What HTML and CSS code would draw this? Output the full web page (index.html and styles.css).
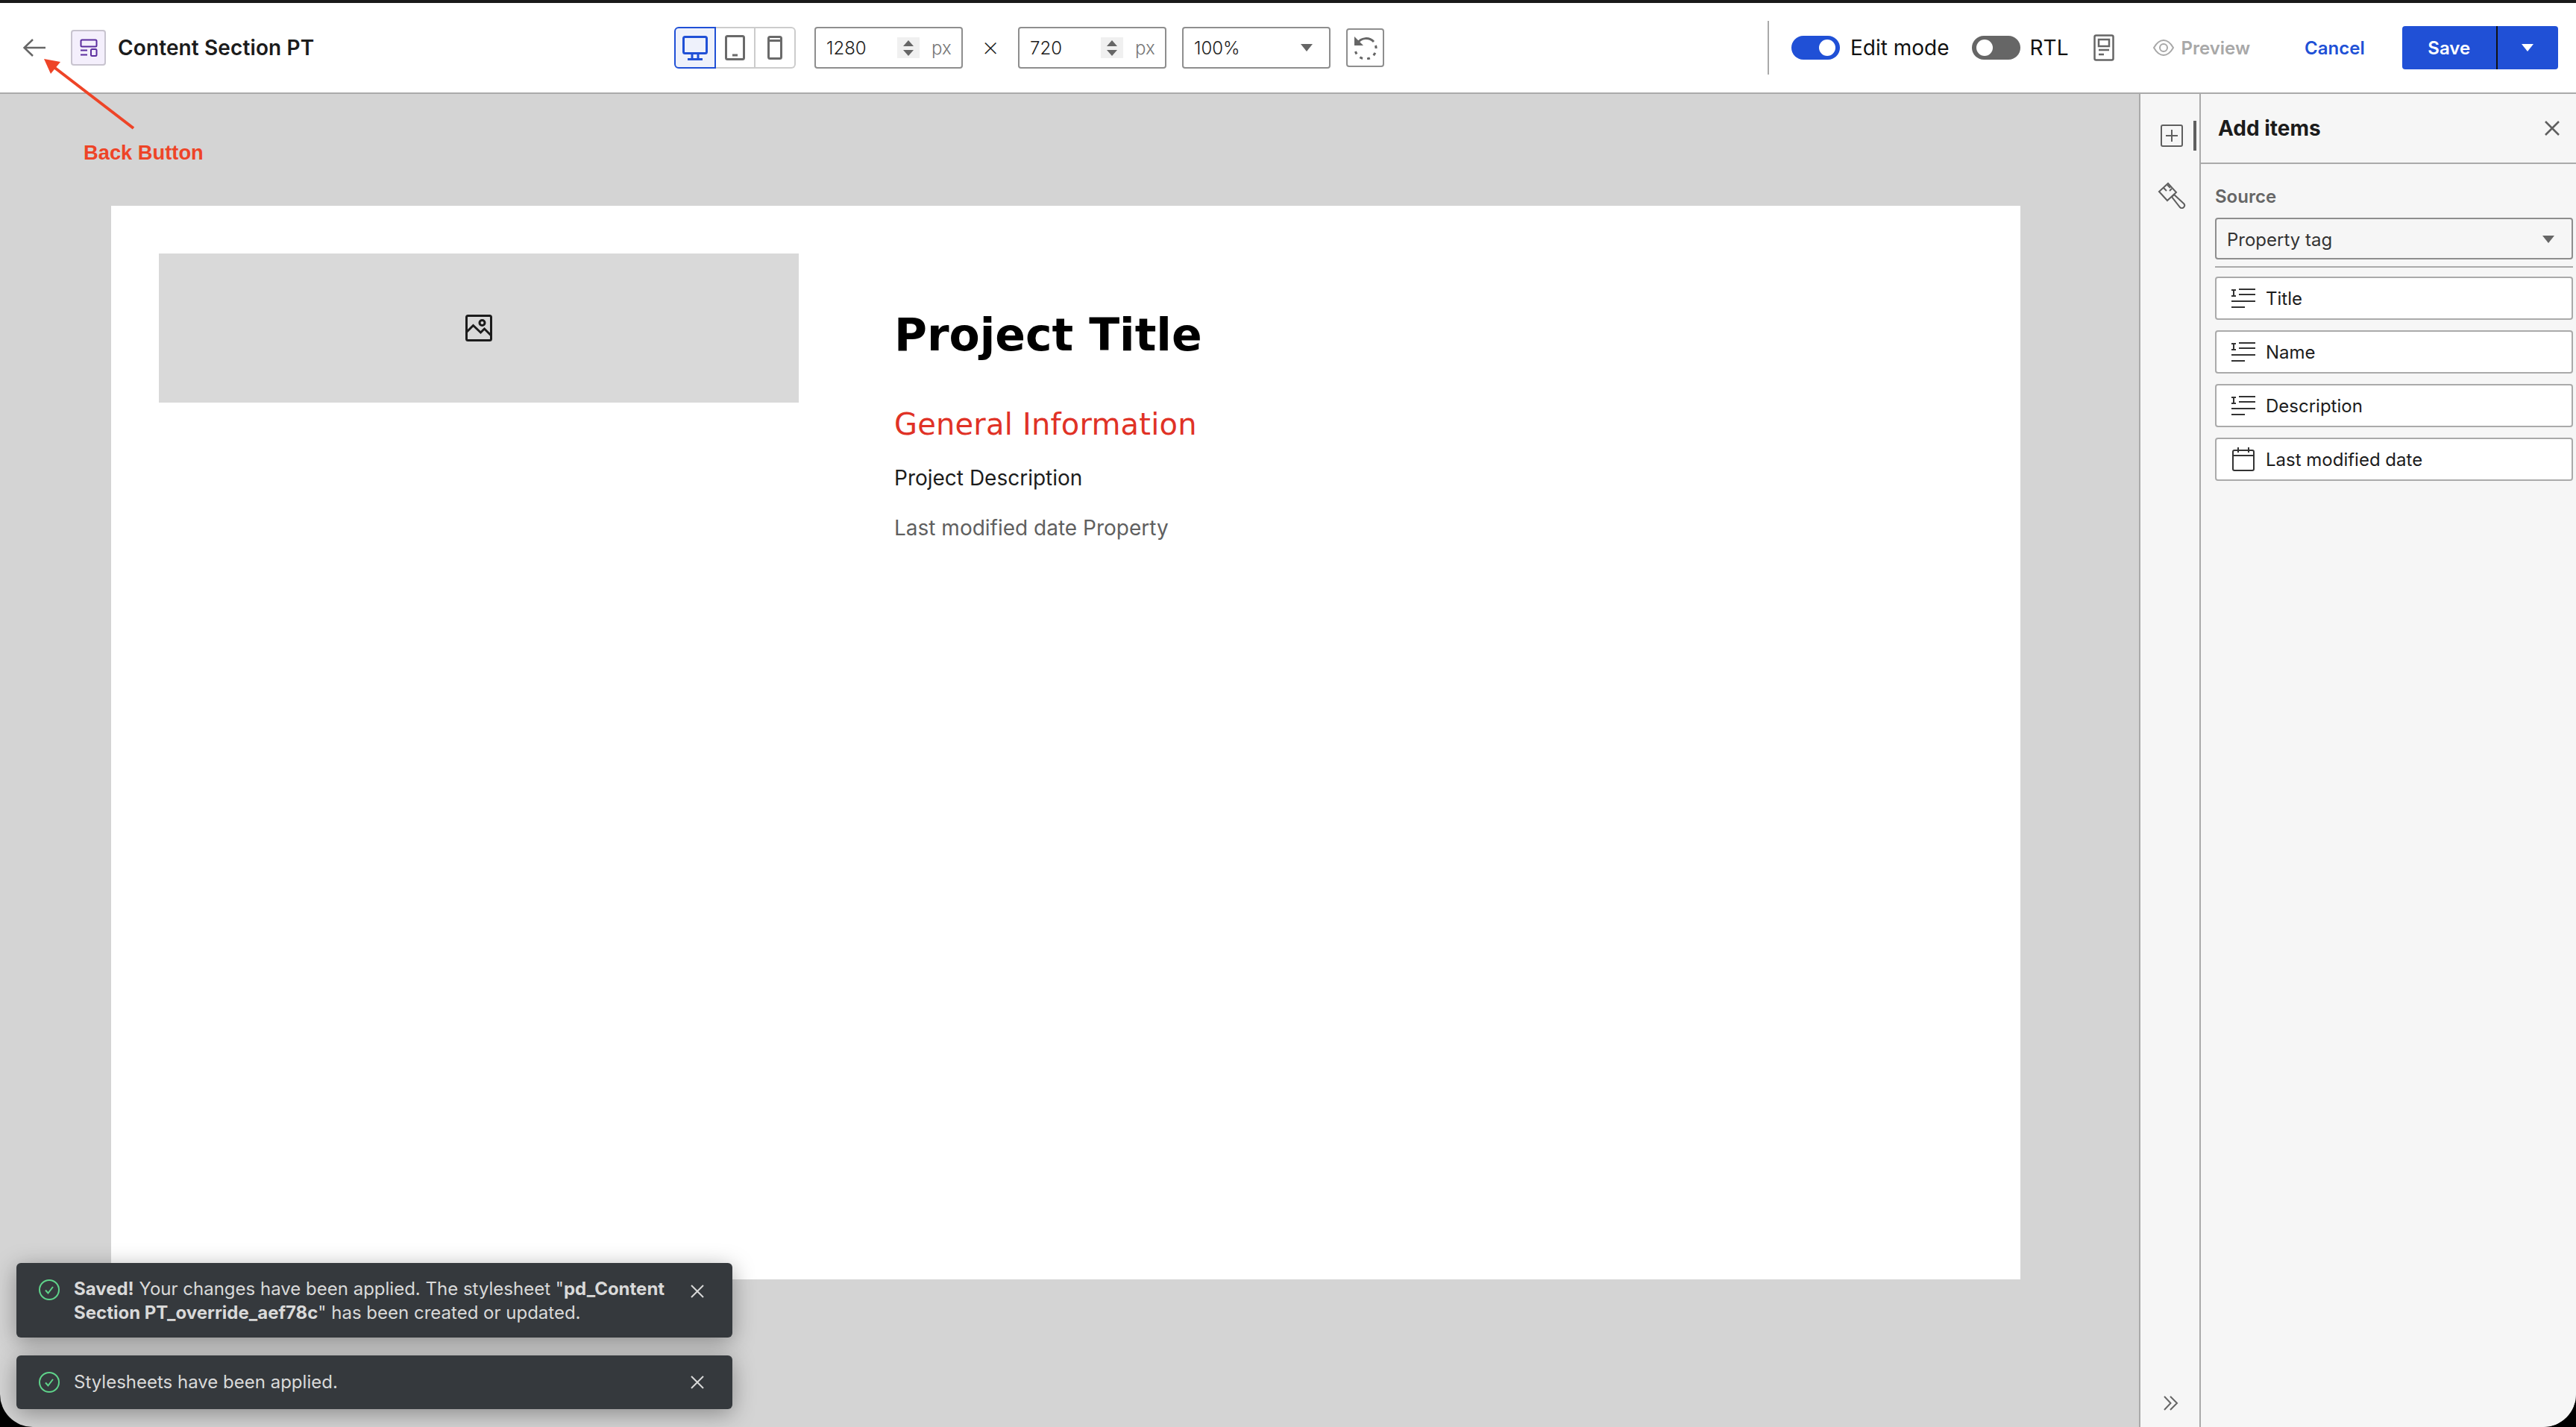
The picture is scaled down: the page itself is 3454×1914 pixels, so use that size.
FILE: index.html
```html
<!DOCTYPE html>
<html lang="en">
<head>
<meta charset="utf-8">
<title>Content Section PT</title>
<link rel="stylesheet" href="styles.css">
</head>
<body>
<div class="app">
  <header class="topbar">
    <div class="tb-left">
      <svg class="back" viewBox="0 0 30 24"><path d="M30 12H1.500M13 1 1.500 12 13 23"/></svg>
      <span class="frag-icon"><svg viewBox="0 0 24 24"><rect x="1.500" y="1.500" width="21" height="9" rx="1.500"/><path d="M1 15.500h9M1 21.500h9"/><rect x="15" y="14" width="7.500" height="9" rx="1.500"/></svg></span>
      <span class="frag-title">Content Section PT</span>
    </div>
    <div class="tb-center">
      <div class="devices">
        <button class="dev dev-on"><svg width="34" height="33" viewBox="0 0 34 33"><rect x="1.500" y="1.500" width="31" height="22" rx="2"/><path d="M13 24v7M21 24v7M7 31.500h20"/></svg></button>
        <button class="dev"><svg width="27" height="34" viewBox="0 0 27 34"><rect x="1.500" y="1.500" width="24" height="31" rx="2"/><path d="M10 27h7"/></svg></button>
        <button class="dev"><svg width="20" height="32" viewBox="0 0 20 32"><rect x="1.500" y="1.500" width="17" height="29" rx="2"/><path d="M2 6.500h16"/></svg></button>
      </div>
      <div class="field field-num">
        <span class="val">1280</span>
        <span class="spin"><i class="up"></i><i class="down"></i></span>
        <span class="unit">px</span>
      </div>
      <span class="times">×</span>
      <div class="field field-num">
        <span class="val">720</span>
        <span class="spin"><i class="up"></i><i class="down"></i></span>
        <span class="unit">px</span>
      </div>
      <div class="field field-sel">
        <span class="val">100%</span>
        <i class="caret"></i>
      </div>
      <button class="reset"><svg width="32" height="32" viewBox="0 0 32 32"><path class="reset-head" d="M1 1v12h12Z"/><path d="M5 10A14 14 0 0 1 27 8"/><path class="dash" d="M29.500 13A14 14 0 1 1 2.500 21"/></svg></button>
    </div>
    <div class="tb-right">
      <span class="vline"></span>
      <span class="switch switch-on"><i></i></span>
      <span class="sw-label lbl-edit">Edit mode</span>
      <span class="switch switch-off"><i></i></span>
      <span class="sw-label lbl-rtl">RTL</span>
      <svg class="doc" width="28" height="36" viewBox="0 0 28 36"><rect x="1.500" y="1.500" width="25" height="33" rx="2"/><rect x="7" y="7" width="14" height="9"/><path d="M7 21h14M7 27h7"/></svg>
      <span class="preview"><svg width="28" height="28" viewBox="0 0 28 28"><path d="M1 14C5 7 9 4 14 4s9 3 13 10c-4 7-8 10-13 10S5 21 1 14Z"/><circle cx="14" cy="14" r="5"/></svg>Preview</span>
      <span class="cancel">Cancel</span>
      <div class="save-group">
        <span class="save">Save</span>
        <span class="save-more"><i></i></span>
      </div>
    </div>
  </header>

  <div class="workspace">
    <main class="canvas">
      <section class="frame">
        <div class="placeholder">
          <svg width="36" height="36" viewBox="0 0 36 36"><rect x="1.500" y="1.500" width="33" height="33" rx="2"/><circle cx="22.500" cy="11" r="3.500"/><path d="M2 23l8.500-8.500 10 9.500 5-5L34 27.500"/></svg>
        </div>
        <div class="copy">
          <h1 class="p-title">Project Title</h1>
          <h2 class="p-sub">General Information</h2>
          <p class="p-desc">Project Description</p>
          <p class="p-date">Last modified date Property</p>
        </div>
      </section>
    </main>

    <nav class="rail">
      <div class="rail-tab">
        <svg width="30" height="30" viewBox="0 0 30 30"><rect x="1" y="1" width="28" height="28" rx="2"/><path d="M15 7v16M7 15h16"/></svg>
        <span class="rail-active"></span>
      </div>
      <div class="rail-tab rail-brush">
        <svg width="38" height="36" viewBox="0 0 38 36"><path d="M2 13 14 2l11 12-12 11Z"/><path d="M8 8l4 4M13 4l4 4M19 9l-3 3"/><path d="M19 20l3-3 13 12c2 2 1 4 0 5s-3 2-5 0Z"/></svg>
      </div>
      <svg class="rail-collapse" width="20" height="20" viewBox="0 0 20 20"><path d="M1 1l8.500 9-8.500 9M9 1l9 9-9 9"/></svg>
    </nav>

    <aside class="panel">
      <div class="panel-head">
        <span class="panel-title">Add items</span>
        <svg class="panel-x" width="20" height="20" viewBox="0 0 20 20"><path d="M1 1l18 18M19 1 1 19"/></svg>
      </div>
      <div class="panel-body">
        <label class="src-label">Source</label>
        <div class="src-select"><span>Property tag</span><i class="caret"></i></div>
        <div class="src-rule"></div>
        <ul class="items">
          <li class="item"><svg class="ti" width="32" height="26" viewBox="0 0 32 26"><path d="M0 2h6M3 2v7M0 10h6"/><path d="M10 1h22M10 8h22M0 17h32M0 25h18"/></svg>Title</li>
          <li class="item"><svg class="ti" width="32" height="26" viewBox="0 0 32 26"><path d="M0 2h6M3 2v7M0 10h6"/><path d="M10 1h22M10 8h22M0 17h32M0 25h18"/></svg>Name</li>
          <li class="item"><svg class="ti" width="32" height="26" viewBox="0 0 32 26"><path d="M0 2h6M3 2v7M0 10h6"/><path d="M10 1h22M10 8h22M0 17h32M0 25h18"/></svg>Description</li>
          <li class="item"><svg class="ti" width="32" height="32" viewBox="0 0 32 32"><rect x="2" y="4" width="28" height="27" rx="2"/><path d="M2 11h28M9 0v7M23 0v7"/></svg>Last modified date</li>
        </ul>
      </div>
    </aside>
  </div>

  <div class="note">
    <svg class="note-arrow" width="130" height="100" viewBox="0 0 130 100"><path d="M120 93 12 10" class="shaft"/><path d="M0 0 22 4 9 20Z" class="head"/></svg>
    <span class="note-text">Back Button</span>
  </div>

  <div class="toasts">
    <div class="toast toast-long">
      <svg class="ok" width="28" height="28" viewBox="0 0 28 28"><circle cx="14" cy="14" r="13"/><path d="M9 14.500l3.500 4L19 10"/></svg>
      <p class="toast-text"><b>Saved!</b> Your changes have been applied. The stylesheet "<b>pd_Content Section PT_override_aef78c</b>" has been created or updated.</p>
      <svg class="toast-x" width="20" height="20" viewBox="0 0 20 20"><path d="M2 2l16 16M18 2 2 18"/></svg>
    </div>
    <div class="toast">
      <svg class="ok" width="28" height="28" viewBox="0 0 28 28"><circle cx="14" cy="14" r="13"/><path d="M9 14.500l3.500 4L19 10"/></svg>
      <p class="toast-text">Stylesheets have been applied.</p>
      <svg class="toast-x" width="20" height="20" viewBox="0 0 20 20"><path d="M2 2l16 16M18 2 2 18"/></svg>
    </div>
  </div>
</div>
</body>
</html>
```

FILE: styles.css
```css
* { box-sizing: border-box; }
html, body { margin: 0; padding: 0; background: #000; }
body { width: 3454px; height: 1914px; overflow: hidden; font-family: Inter, "Liberation Sans", sans-serif; color: #1c1c1c; }
svg { display: block; flex: none; fill: none; }
p, h1, h2, ul { margin: 0; padding: 0; }
i { display: block; }
button { padding: 0; font: inherit; background: none; }

.app { position: relative; width: 3454px; height: 1914px; display: flex; flex-direction: column; background: #d4d4d4; border-top: 4px solid #1a1a1a; border-radius: 0 0 44px 44px; overflow: hidden; }

/* top bar */
.topbar { flex: none; height: 122px; background: #fff; border-bottom: 2px solid #aaa; display: flex; align-items: center; }
.tb-left { flex: 0 0 904px; display: flex; align-items: center; padding-left: 31px; }
.back { width: 30px; height: 24px; stroke: #666; stroke-width: 2.500px; }
.frag-icon { width: 47px; height: 48px; margin-left: 34px; background: #f4effc; border: 2px solid #c8c4cf; border-radius: 4px; display: flex; align-items: center; justify-content: center; }
.frag-icon svg { width: 24px; height: 24px; stroke: #5b2d9e; stroke-width: 2px; }
.frag-title { margin-left: 16px; font-size: 28px; font-weight: 600; letter-spacing: .12px; white-space: nowrap; }

.tb-center { flex: none; display: flex; align-items: center; }
.devices { display: flex; height: 56px; width: 163px; }
.dev { flex: 1; border: 2px solid #ccc; border-left-width: 0; display: flex; align-items: center; justify-content: center; }
.dev:last-child { border-radius: 0 6px 6px 0; }
.dev svg { stroke: #6a6a6a; stroke-width: 3px; }
.dev-on { background: #eef1fb; border: 2px solid #2050d6; border-radius: 6px 0 0 6px; }
.dev-on svg { stroke: #2050d6; }

.field { height: 56px; width: 199px; border: 2px solid #8e8e8e; border-radius: 4px; background: #fff; display: flex; align-items: center; font-size: 24px; font-weight: 300; }
.field-num { padding-left: 14px; }
.devices + .field { margin-left: 25px; }
.val { color: #1c1c1c; }
.field-num .val { flex: 0 0 95px; }
.spin { width: 30px; height: 28px; background: #f0f0f0; display: flex; flex-direction: column; align-items: center; justify-content: center; gap: 5px; }
.up { width: 0; height: 0; border: 7px solid transparent; border-top: 0; border-bottom: 8px solid #666; }
.down { width: 0; height: 0; border: 7px solid transparent; border-bottom: 0; border-top: 8px solid #666; }
.unit { margin-left: 16px; color: #777; }
.times { width: 74px; text-align: center; font-size: 36px; line-height: 36px; font-weight: 200; padding-bottom: 4px; }
.field-sel { margin-left: 21px; padding: 0 22px 0 14px; justify-content: space-between; }
.caret { width: 0; height: 0; border: 8px solid transparent; border-bottom: 0; border-top: 10px solid #666; }
.reset { margin-left: 21px; width: 51px; height: 52px; border: 2px solid #8e8e8e; border-radius: 4px; display: flex; align-items: center; justify-content: center; }
.reset svg { stroke: #666; stroke-width: 3px; }
.reset .reset-head { fill: #666; stroke: none; }
.reset .dash { stroke-dasharray: 4 6; }

.tb-right { flex: 1; display: flex; align-items: center; padding-left: 514px; }
.vline { width: 2px; height: 72px; background: #aaa; }
.switch { width: 65px; height: 32px; border-radius: 16px; display: flex; align-items: center; padding: 0 6px; }
.switch i { width: 22px; height: 22px; border-radius: 50%; background: #fff; }
.switch-on { margin-left: 30px; background: #2050d6; justify-content: flex-end; }
.switch-off { margin-left: 30px; background: #666; }
.sw-label { font-size: 28px; font-weight: 400; color: #111; white-space: nowrap; }
.lbl-edit { margin-left: 14px; }
.lbl-rtl { margin-left: 13px; }
.doc { margin-left: 33px; stroke: #666; stroke-width: 2.500px; }
.preview { margin-left: 52px; display: flex; align-items: center; gap: 10px; font-size: 24px; font-weight: 600; color: #a8a8a8; }
.preview svg { stroke: #a8a8a8; stroke-width: 2px; }
.cancel { margin-left: 73px; font-size: 24px; font-weight: 600; color: #2050d6; }
.save-group { margin-left: 50px; width: 209px; height: 58px; background: #2050d6; border-radius: 4px; display: flex; color: #fff; font-size: 24px; font-weight: 600; }
.save { width: 128px; display: flex; align-items: center; justify-content: center; border-right: 2px solid #111; }
.save-more { flex: 1; display: flex; align-items: center; justify-content: center; }
.save-more i { width: 0; height: 0; border: 8px solid transparent; border-bottom: 0; border-top: 10px solid #fff; }

/* workspace */
.workspace { flex: 1; min-height: 0; display: flex; }
.canvas { flex: 0 0 2868px; padding: 150px 0 0 149px; }
.frame { width: 2560px; height: 1440px; background: #fff; padding: 64px; display: flex; }
.placeholder { flex: 0 0 858px; height: 200px; background: #d9d9d9; display: flex; align-items: center; justify-content: center; }
.placeholder svg { stroke: #1c1c1c; stroke-width: 3px; }
.copy { margin-left: 128px; padding-top: 73px; }
.p-title { font: 700 60px/72px "DejaVu Sans", sans-serif; color: #000; }
.p-sub { margin-top: 60px; font: 400 40px/48px "DejaVu Sans", sans-serif; letter-spacing: .2px; color: #e03226; }
.p-desc { margin-top: 28px; font-size: 28px; line-height: 40px; color: #1c1c1c; }
.p-date { margin-top: 27px; font-size: 28px; line-height: 40px; color: #5f5f5f; }

/* rail */
.rail { flex: 0 0 81px; background: #f6f6f6; border-left: 2px solid #aaa; display: flex; flex-direction: column; padding-top: 36px; }
.rail-tab { height: 40px; padding-left: 27px; display: flex; align-items: center; gap: 14px; }
.rail-tab svg { stroke: #5f5f5f; stroke-width: 2px; }
.rail-active { width: 4px; height: 40px; background: #5f5f5f; }
.rail-brush { margin-top: 40px; padding-left: 23px; }
.rail-collapse { margin-top: auto; margin-bottom: 22px; margin-left: 31px; stroke: #666; stroke-width: 2px; }

/* panel */
.panel { flex: 1; background: #f6f6f6; border-left: 2px solid #aaa; display: flex; flex-direction: column; }
.panel-head { height: 94px; border-bottom: 2px solid #aaa; display: flex; align-items: center; justify-content: space-between; padding: 0 22px 0 23px; }
.panel-title { font-size: 28px; font-weight: 700; }
.panel-x { stroke: #5f5f5f; stroke-width: 2.500px; }
.panel-body { padding: 30px 4px 0 19px; }
.src-label { display: block; font-size: 24px; line-height: 28px; font-weight: 600; color: #666; }
.src-select { margin-top: 14px; height: 56px; background: #f6f6f6; border: 2px solid #8e8e8e; border-radius: 4px; display: flex; align-items: center; justify-content: space-between; padding: 2px 23px 0 14px; font-size: 24px; color: #333; }
.src-rule { margin-top: 9px; height: 2px; background: #aaa; }
.items { list-style: none; margin-top: 12px; display: flex; flex-direction: column; gap: 14px; }
.item { height: 58px; background: #fff; border: 2px solid #aaa; border-radius: 4px; display: flex; align-items: center; padding-left: 20px; gap: 14px; font-size: 24px; color: #1c1c1c; }
.ti { stroke: #333; stroke-width: 2px; }

/* annotation */
.note { position: absolute; left: 0; top: 0; }
.note-arrow { position: absolute; left: 59px; top: 75px; }
.note-arrow .shaft { stroke: #ee4427; stroke-width: 4px; }
.note-arrow .head { fill: #ee4427; }
.note-text { position: absolute; left: 112px; top: 185px; font: 700 27.3px/32px "Liberation Sans", sans-serif; color: #ee4427; white-space: nowrap; }

/* toasts */
.toasts { position: absolute; left: 22px; bottom: 24px; width: 960px; display: flex; flex-direction: column; gap: 24px; }
.toast { height: 72px; background: #35393d; border-radius: 6px; box-shadow: 0 6px 30px rgba(0,0,0,.35); display: flex; align-items: center; padding: 0 37px 0 30px; color: #d9d9d9; }
.toast-long { height: 100px; align-items: flex-start; padding-top: 22px; }
.toast-long .toast-text { margin-top: -3px; }
.toast-long .toast-x { margin-top: 6px; }
.ok { stroke: #5fd38a; stroke-width: 2px; }
.toast-text { flex: 1; margin-left: 19px; font-size: 24px; line-height: 32px; padding-right: 20px; }
.toast-text b { font-weight: 700; }
.toast-x { stroke: #d9d9d9; stroke-width: 2px; }
```
